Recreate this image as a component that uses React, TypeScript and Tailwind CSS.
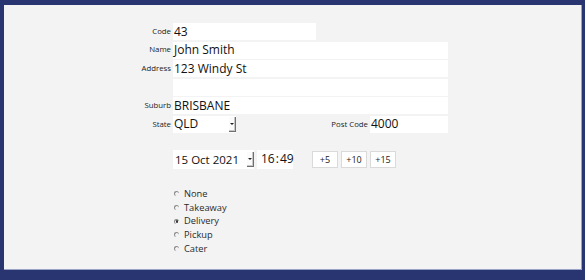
import React from 'react';

const font = { fontFamily: '"Open Sans", "Noto Sans", sans-serif' };

function Row({ label, children }: { label?: string; children: React.ReactNode }) {
  return (
    <div className="flex h-[17px] items-center">
      <div className="w-[169px] pr-[2px] text-right text-[7.8px] text-[#222]">{label}</div>
      {children}
    </div>
  );
}

function Field({ value, w }: { value?: string; w: string }) {
  return (
    <div className={`${w} flex h-[17px] items-center whitespace-nowrap bg-white pl-[1px] text-[12px] leading-none text-[#111]`}>
      {value}
    </div>
  );
}

function DropBtn() {
  return (
    <div className="flex h-[15px] w-[7px] shrink-0 items-center justify-center border-r border-b border-[#6f6f6f] bg-[#fbfbfb] shadow-[inset_-1px_-1px_0_#c8c8c8]">
      <div className="h-0 w-0 border-x-[2px] border-t-[2px] border-x-transparent border-t-[#222]" />
    </div>
  );
}

function Radio({ label, checked }: { label: string; checked?: boolean }) {
  return (
    <div className="flex h-[13.7px] items-center">
      <div className="relative ml-[1px] h-[5px] w-[5px] rounded-full border-t border-l border-[#888]">
        {checked && <div className="absolute left-[0.5px] top-[0.5px] h-[2.5px] w-[2.5px] rounded-full bg-[#333]" />}
      </div>
      <span className="ml-[5px] text-[9.3px] text-[#2a2a2a]">{label}</span>
    </div>
  );
}

export default function App() {
  return (
    <div className="h-[280px] w-[585px] bg-[#283570] pt-[5px] pl-[4px] pr-[3px]" style={font}>
      <div className="h-[265px] border-r border-b border-[#9aa3c6] bg-[#f3f3f3] pt-[18px]">
        <div className="flex flex-col gap-[1.6px]">
          <Row label="Code"><Field value="43" w="w-[143px]" /></Row>
          <Row label="Name"><Field value="John Smith" w="w-[275px]" /></Row>
          <Row label="Address"><Field value="123 Windy St" w="w-[275px]" /></Row>
          <Row><Field w="w-[275px]" /></Row>
          <Row label="Suburb"><Field value="BRISBANE" w="w-[275px]" /></Row>
          <Row label="State">
            <div className="flex h-[17px] w-[63px] items-center justify-between bg-white pl-[1px] text-[12px] leading-none text-[#111]">
              QLD
              <DropBtn />
            </div>
            <div className="w-[134px] pr-[2px] text-right text-[7.8px] text-[#222]">Post Code</div>
            <Field value="4000" w="w-[78px]" />
          </Row>
        </div>

        <div className="mt-[17px] flex h-[19px] items-center pl-[169px]">
          <div className="flex h-[19px] w-[81px] items-center bg-white pl-[2px] text-[11.5px] leading-none text-[#111]">
            <span className="w-[72px] whitespace-nowrap">15 Oct 2021</span>
            <DropBtn />
          </div>
          <div className="ml-[3px] flex h-[19px] w-[36px] items-center whitespace-nowrap bg-white pl-[4px] text-[12px] leading-none text-[#111]">
            16<span className="mx-[1px]">:</span>49
          </div>
          <div className="ml-[19px] flex gap-[3px]">
            {['+5', '+10', '+15'].map((b) => (
              <div key={b} className="flex h-[17px] w-[26px] items-center justify-center border border-[#dadada] bg-white text-[9px] text-[#222]">
                {b}
              </div>
            ))}
          </div>
        </div>

        <div className="mt-[18px] flex flex-col pl-[169px]">
          <Radio label="None" />
          <Radio label="Takeaway" />
          <Radio label="Delivery" checked />
          <Radio label="Pickup" />
          <Radio label="Cater" />
        </div>
      </div>
    </div>
  );
}
